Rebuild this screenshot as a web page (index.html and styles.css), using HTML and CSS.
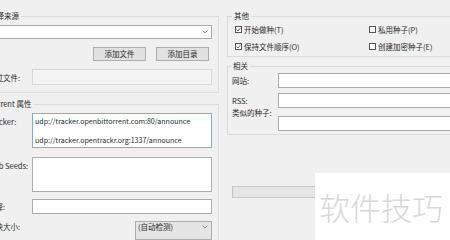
FILE: index.html
```html
<!DOCTYPE html>
<html lang="zh-CN">
<head>
<meta charset="utf-8">
<title>创建新 Torrent</title>
<link rel="stylesheet" href="styles.css">
</head>
<body>
<div class="dialog">
  <div class="col-left">
    <div class="group g-source">
      <div class="gtitle">选择来源</div>
      <div class="combo combo-white">
        <span></span>
        <svg class="chev" width="6" height="4" viewBox="0 0 6 4"><path d="M0.5 0.5 L3 3 L5.5 0.5" fill="none" stroke="#777" stroke-width="0.8"/></svg>
      </div>
      <div class="btnrow">
        <button class="btn">添加文件</button>
        <button class="btn">添加目录</button>
      </div>
      <div class="row">
        <div class="lbl">跳过文件:</div>
        <div class="input disabled"></div>
      </div>
    </div>
    <div class="group g-props">
      <div class="gtitle">Torrent 属性</div>
      <div class="form">
        <div class="lbl lbl-top">Tracker:</div>
        <div class="ta ta-focus">udp://tracker.openbittorrent.com:80/announce<br><br>udp://tracker.opentrackr.org:1337/announce</div>
        <div class="lbl lbl-top seeds">Web Seeds:</div>
        <div class="ta seeds"></div>
        <div class="lbl">注释:</div>
        <div class="input"></div>
        <div class="lbl lbl-piece">分块大小:</div>
        <div class="combo combo-grey">
          <span>(自动检测)</span>
          <svg class="chev" width="6" height="4" viewBox="0 0 6 4"><path d="M0.5 0.5 L3 3 L5.5 0.5" fill="none" stroke="#777" stroke-width="0.8"/></svg>
        </div>
      </div>
    </div>
  </div>
  <div class="col-right">
    <div class="group g-other">
      <div class="gtitle">其他</div>
      <div class="checks">
        <div class="chk"><svg class="box" width="7" height="7" viewBox="0 0 7 7"><rect x="0.5" y="0.5" width="6" height="6" fill="#fff" stroke="#555"/><path d="M1.5 3.6 L2.9 5 L5.6 1.8" fill="none" stroke="#333" stroke-width="0.8"/></svg><span>开始做种(T)</span></div>
        <div class="chk"><svg class="box" width="7" height="7" viewBox="0 0 7 7"><rect x="0.5" y="0.5" width="6" height="6" fill="#fff" stroke="#555"/></svg><span>私用种子(P)</span></div>
        <div class="chk"><svg class="box" width="7" height="7" viewBox="0 0 7 7"><rect x="0.5" y="0.5" width="6" height="6" fill="#fff" stroke="#555"/><path d="M1.5 3.6 L2.9 5 L5.6 1.8" fill="none" stroke="#333" stroke-width="0.8"/></svg><span>保持文件顺序(O)</span></div>
        <div class="chk"><svg class="box" width="7" height="7" viewBox="0 0 7 7"><rect x="0.5" y="0.5" width="6" height="6" fill="#fff" stroke="#555"/></svg><span>创建加密种子(E)</span></div>
      </div>
    </div>
    <div class="group g-related">
      <div class="gtitle">相关</div>
      <div class="rform">
        <div class="lbl">网站:</div>
        <div class="input r-in"></div>
        <div class="lbl">RSS:</div>
        <div class="input r-in"></div>
        <div class="lbl lbl-similar">类似的种子:</div>
        <div class="input r-in similar"></div>
      </div>
    </div>
    <div class="progress"></div>
  </div>
</div>
<div class="watermark">软件技巧</div>
</body>
</html>
```
FILE: styles.css
```css
* { box-sizing: border-box; }
html, body { margin: 0; }
body {
  width: 450px;
  height: 240px;
  overflow: hidden;
  position: relative;
  background: #f0f0f0;
  font-family: "Noto Sans CJK SC", "Noto Sans", sans-serif;
  font-size: 7.5px;
  color: #2a2a2a;
}
.dialog {
  display: flex;
  gap: 8px;
  margin-left: -22px;
  padding-top: 16px;
}
.col-left {
  width: 241px;
  flex: none;
  display: flex;
  flex-direction: column;
}
.col-right {
  width: 260px;
  flex: none;
  display: flex;
  flex-direction: column;
}
.group {
  border: 1px solid #dcdcdc;
}
.gtitle {
  margin-top: -6px;
  height: 10px;
  line-height: 10px;
  width: fit-content;
  padding: 0 2px;
  background: #f0f0f0;
  white-space: nowrap;
}
.g-source {
  height: 77px;
  padding: 0 6px 6px 8px;
}
.combo {
  display: flex;
  align-items: center;
  justify-content: space-between;
  border: 1px solid #adadad;
  padding: 0 3px 0 2px;
}
.combo-white {
  height: 14px;
  margin-top: 4px;
  background: #fff;
}
.chev { display: block; }
.btnrow {
  display: flex;
  justify-content: flex-end;
  gap: 10px;
  margin-top: 8px;
  padding-right: 3px;
}
.btn {
  width: 53px;
  height: 14px;
  border: 1px solid #adadad;
  background: #e1e1e1;
  font: inherit;
  color: inherit;
  padding: 0;
  line-height: 12px;
}
.row {
  display: grid;
  grid-template-columns: 45px 1fr;
  align-items: center;
  margin-top: 8px;
}
.lbl { white-space: nowrap; }
.col-left .lbl { padding-left: 1px; }
.input {
  height: 16px;
  border: 1px solid #acacac;
  background: #fff;
}
.input.disabled {
  background: #f3f3f3;
  border-color: #d9d9d9;
}
.g-props {
  margin-top: 11px;
  height: 200px;
  padding: 0 6px 0 8px;
}
.form {
  display: grid;
  grid-template-columns: 45px 1fr;
  align-items: center;
  row-gap: 7px;
  margin-top: 4px;
}
.ta {
  height: 35px;
  border: 1px solid #acacac;
  background: #fff;
  padding: 3px 2px;
  font-size: 7.05px;
  line-height: 9.5px;
  white-space: nowrap;
  overflow: hidden;
  color: #2a2a2a;
}
.ta-focus { border-color: #7aaee0; }
.ta.seeds, .lbl.seeds { margin-top: 2px; }
.lbl-top {
  align-self: start;
  padding-top: 4px;
  line-height: 9.5px;
}
.form .input { height: 15px; }
.lbl-piece {
  align-self: start;
  line-height: 9px;
  padding-top: 1px;
}
.combo-grey {
  justify-self: end;
  width: 77px;
  height: 19px;
  align-items: flex-start;
  background: #e5e5e5;
  line-height: 9px;
  padding-top: 0;
}
.combo-grey .chev { margin-top: 3px; }
.g-other {
  padding: 0 0 5px 7px;
}
.g-other .gtitle { margin-left: -3px; }
.checks {
  display: grid;
  grid-template-columns: 134px 1fr;
  row-gap: 7px;
  margin-top: 3px;
}
.chk {
  display: flex;
  align-items: center;
  gap: 2px;
  height: 10px;
  white-space: nowrap;
}
.box { display: block; flex: none; }
.g-related {
  margin-top: 9px;
  padding: 0 0 3px 4px;
}
.g-related .gtitle { margin-left: -1px; }
.rform {
  display: grid;
  grid-template-columns: 46px 1fr;
  align-items: center;
  row-gap: 5px;
  margin-top: 2px;
}
.r-in { height: 15px; }
.r-in.similar { margin-top: 3px; }
.lbl-similar {
  align-self: start;
  line-height: 10px;
  margin-top: -5px;
}
.progress {
  margin-top: 51px;
  margin-left: 5px;
  width: 100px;
  height: 12px;
  border: 1px solid #c8c8c8;
  background: #e6e6e6;
}
.watermark {
  position: absolute;
  left: 315px;
  top: 173px;
  width: 135px;
  height: 67px;
  background: #fff;
  color: #d8d8d8;
  font-size: 31px;
  font-weight: 300;
  line-height: 67px;
  padding-left: 4px;
  white-space: nowrap;
}
```
